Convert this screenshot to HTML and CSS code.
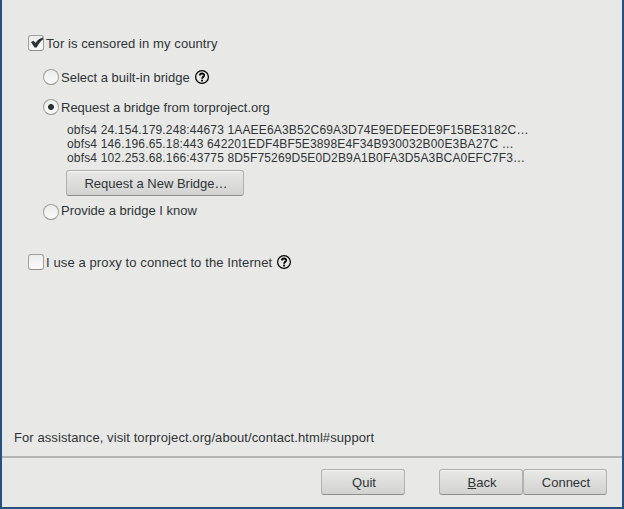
FILE: index.html
```html
<!DOCTYPE html>
<html lang="en">
<head>
<meta charset="utf-8">
<title>Tor Network Settings</title>
<link rel="stylesheet" href="styles.css">
</head>
<body>
<div class="window">
  <main class="settings">
    <label class="row row-censored"><span class="check"><svg width="16" height="16" viewBox="0 0 16 16"><path d="M3 6.9 L5.6 5.8 L7.5 8 C9 5.8 11 3.6 14.8 2.6 L15.2 4.2 C12.6 6 10.6 8.8 8.7 12.4 L6.5 12.4 Z" fill="#2b3335"/></svg></span><span class="text wide">Tor is censored in my country</span></label>
    <div class="options">
      <label class="row row-builtin"><span class="radio"></span><span class="text">Select a built-in bridge</span><svg class="help" width="16" height="16" viewBox="0 0 16 16"><circle cx="8" cy="8" r="6.4" fill="none" stroke="#000" stroke-width="1.25"/><path d="M5.9 6.6 C5.9 3.8 10.3 3.9 10.2 6.4 C10.1 7.8 8.1 7.9 8.1 9.7" fill="none" stroke="#000" stroke-width="1.8"/><rect x="7.1" y="10.7" width="1.9" height="1.7"/></svg></label>
      <label class="row row-request"><span class="radio radio-on"></span><span class="text">Request a bridge from torproject.org</span></label>
      <div class="bridges">
        <div>obfs4 24.154.179.248:44673 1AAEE6A3B52C69A3D74E9EDEEDE9F15BE3182C…</div>
        <div>obfs4 146.196.65.18:443 642201EDF4BF5E3898E4F34B930032B00E3BA27C …</div>
        <div>obfs4 102.253.68.166:43775 8D5F75269D5E0D2B9A1B0FA3D5A3BCA0EFC7F3…</div>
      </div>
      <button class="button button-request">Request a New Bridge…</button>
      <label class="row row-provide"><span class="radio"></span><span class="provide-text">Provide a bridge I know</span></label>
    </div>
    <label class="row row-proxy"><span class="check"></span><span class="text wide">I use a proxy to connect to the Internet</span><svg class="help" width="16" height="16" viewBox="0 0 16 16"><circle cx="8" cy="8" r="6.4" fill="none" stroke="#000" stroke-width="1.25"/><path d="M5.9 6.6 C5.9 3.8 10.3 3.9 10.2 6.4 C10.1 7.8 8.1 7.9 8.1 9.7" fill="none" stroke="#000" stroke-width="1.8"/><rect x="7.1" y="10.7" width="1.9" height="1.7"/></svg></label>
    <p class="assistance wide">For assistance, visit torproject.org/about/contact.html#support</p>
  </main>
  <footer class="actions">
    <button class="button button-quit">Quit</button>
    <button class="button"><span><u>B</u>ack</span></button>
    <button class="button">Connect</button>
  </footer>
</div>
</body>
</html>
```
FILE: styles.css
```css
* { box-sizing: border-box; }

body {
  margin: 0;
  font: 13px/16px "Liberation Sans", Arial, sans-serif;
  color: #2e3436;
}

.window {
  display: flex;
  flex-direction: column;
  width: 624px;
  height: 509px;
  border: solid #24527f;
  border-width: 0 2px 2px;
  background: #e8e8e6;
}

.settings {
  display: flex;
  flex-direction: column;
  height: 458px;
  padding: 35px 12px 10px;
  border-bottom: 2px solid #b4b4b2;
}

.row {
  display: flex;
  align-items: center;
  height: 16px;
  margin-left: 14px;
  gap: 2px;
  white-space: nowrap;
}

.text { padding-top: 2px; }
.wide { letter-spacing: 0.085px; }

.options {
  margin-left: 15px;
  padding-top: 18px;
}

.check,
.radio {
  flex: none;
  display: flex;
  width: 16px;
  height: 16px;
  border: 1px solid #a0a09e;
  border-bottom-color: #8e8e8c;
  background: linear-gradient(#ececeb, #fafafa);
}

.check { border-radius: 3px; }
.check svg { flex: none; margin: -1px; }
.radio { border-radius: 50%; }

.radio-on {
  background: radial-gradient(circle, #2b3335 2.6px, transparent 3.3px), linear-gradient(#ececeb, #fafafa);
}

.help { margin-left: 2px; }
.row-request { margin-top: 14px; }

.bridges {
  margin: 8px 0 5px 38px;
  font-size: 12px;
  line-height: 14px;
  letter-spacing: 0.16px;
  white-space: nowrap;
}

.button {
  display: flex;
  align-items: center;
  justify-content: center;
  width: 84px;
  height: 26px;
  padding: 2px 0 0 2px;
  border: 1px solid #b0b0ae;
  border-bottom-color: #8e8e8c;
  border-radius: 3px;
  background: linear-gradient(#e8e8e7, #d2d2d0);
  box-shadow: inset 0 1px #f4f4f3;
  font: inherit;
  color: inherit;
}

.button-request { width: 178px; margin-left: 37px; }
.row-provide { margin-top: 8px; }
.provide-text { margin-top: -2px; }
.row-proxy { margin-top: 34px; }
.row-proxy .wide { letter-spacing: 0.11px; }
.assistance { margin: auto 0 0; }

.actions {
  display: flex;
  justify-content: flex-end;
  padding: 11px 15px 0 0;
}

.button-quit { margin-right: 34px; }
```
